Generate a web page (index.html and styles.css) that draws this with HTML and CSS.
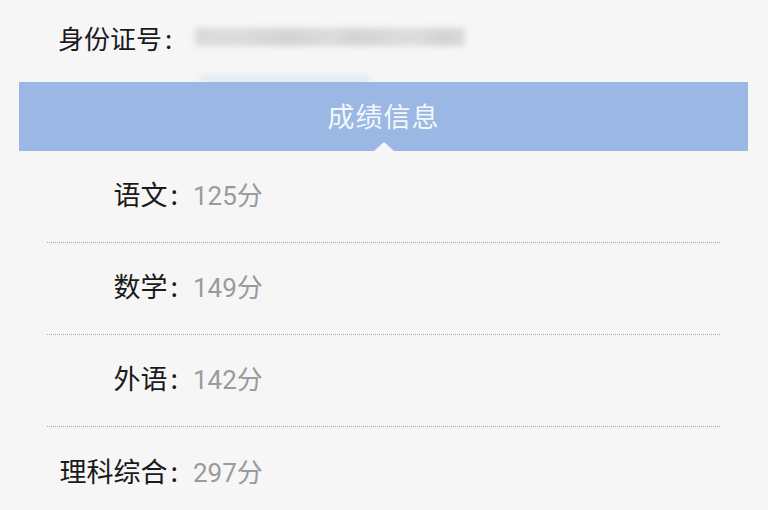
FILE: index.html
```html
<!DOCTYPE html>
<html lang="zh-CN">
<head>
<meta charset="utf-8">
<link rel="stylesheet" href="styles.css">
</head>
<body>
<div class="page">
  <div class="idrow">
    <span class="idlabel">身份证号<span class="colon">:</span></span>
    <div class="blurid"></div>
  </div>
  <div class="smudge"></div>
  <div class="bar">
    <span class="bartitle">成绩信息</span>
    <span class="caret"></span>
  </div>
  <ul class="list">
    <li class="row"><span class="label">语文<span class="colon">:</span></span><span class="value">125分</span></li>
    <li class="row"><span class="label">数学<span class="colon">:</span></span><span class="value">149分</span></li>
    <li class="row"><span class="label">外语<span class="colon">:</span></span><span class="value">142分</span></li>
    <li class="row last"><span class="label">理科综合<span class="colon">:</span></span><span class="value">297分</span></li>
  </ul>
</div>
</body>
</html>
```
FILE: styles.css
```css
html, body {
  margin: 0;
  padding: 0;
  background: #f6f6f6;
}
.page {
  width: 768px;
  height: 510px;
  overflow: hidden;
  font-family: Roboto, "Noto Sans CJK SC", sans-serif;
  position: relative;
}
.idrow {
  height: 70px;
  display: flex;
  align-items: center;
  padding-left: 58px;
  padding-top: 4px;
  box-sizing: border-box;
}
.idlabel {
  font-family: "Noto Sans CJK SC", sans-serif;
  font-size: 26px;
  color: #1a1a1a;
  width: 137px;
  white-space: nowrap;
}
.colon {
  margin-left: 3px;
}
.blurid {
  width: 270px;
  height: 18px;
  background: linear-gradient(90deg, #d6d6d6 0%, #dadada 15%, #cfcfcf 35%, #d9d9d9 50%, #d0d0d0 60%, #dbdbdb 80%, #cfcfcf 92%, #d8d8d8 100%);
  filter: blur(3px);
  opacity: 0.9;
}
.smudge {
  height: 12px;
  margin-left: 200px;
  width: 170px;
  background: linear-gradient(180deg, #f6f6f6 0%, #dfe7f4 100%);
  filter: blur(2px);
}
.bar {
  margin: 0 20px 0 19px;
  height: 69px;
  background: #9bb8e4;
  display: flex;
  align-items: center;
  justify-content: center;
  position: relative;
}
.bartitle {
  font-family: "Noto Sans CJK SC", sans-serif;
  font-size: 27px;
  color: #f4f7fc;
  letter-spacing: 1px;
  padding-bottom: 3px;
}
.caret {
  position: absolute;
  left: 355px;
  bottom: 0;
  width: 0;
  height: 0;
  border-left: 10px solid transparent;
  border-right: 10px solid transparent;
  border-bottom: 9px solid #f6f6f6;
}
.list {
  list-style: none;
  margin: 0 48px 0 47px;
  padding: 0;
}
.row {
  height: 92px;
  border-bottom: 1px dotted #a8a8a8;
  display: flex;
  align-items: center;
  box-sizing: border-box;
  padding-bottom: 6px;
}
.row.last {
  border-bottom: none;
}
.label {
  width: 131px;
  text-align: right;
  font-family: "Noto Sans CJK SC", sans-serif;
  font-size: 27px;
  color: #1a1a1a;
  white-space: nowrap;
}
.value {
  font-family: Roboto, "Noto Sans CJK SC", sans-serif;
  font-size: 26px;
  color: #9a9a9a;
  margin-left: 15px;
}
```
